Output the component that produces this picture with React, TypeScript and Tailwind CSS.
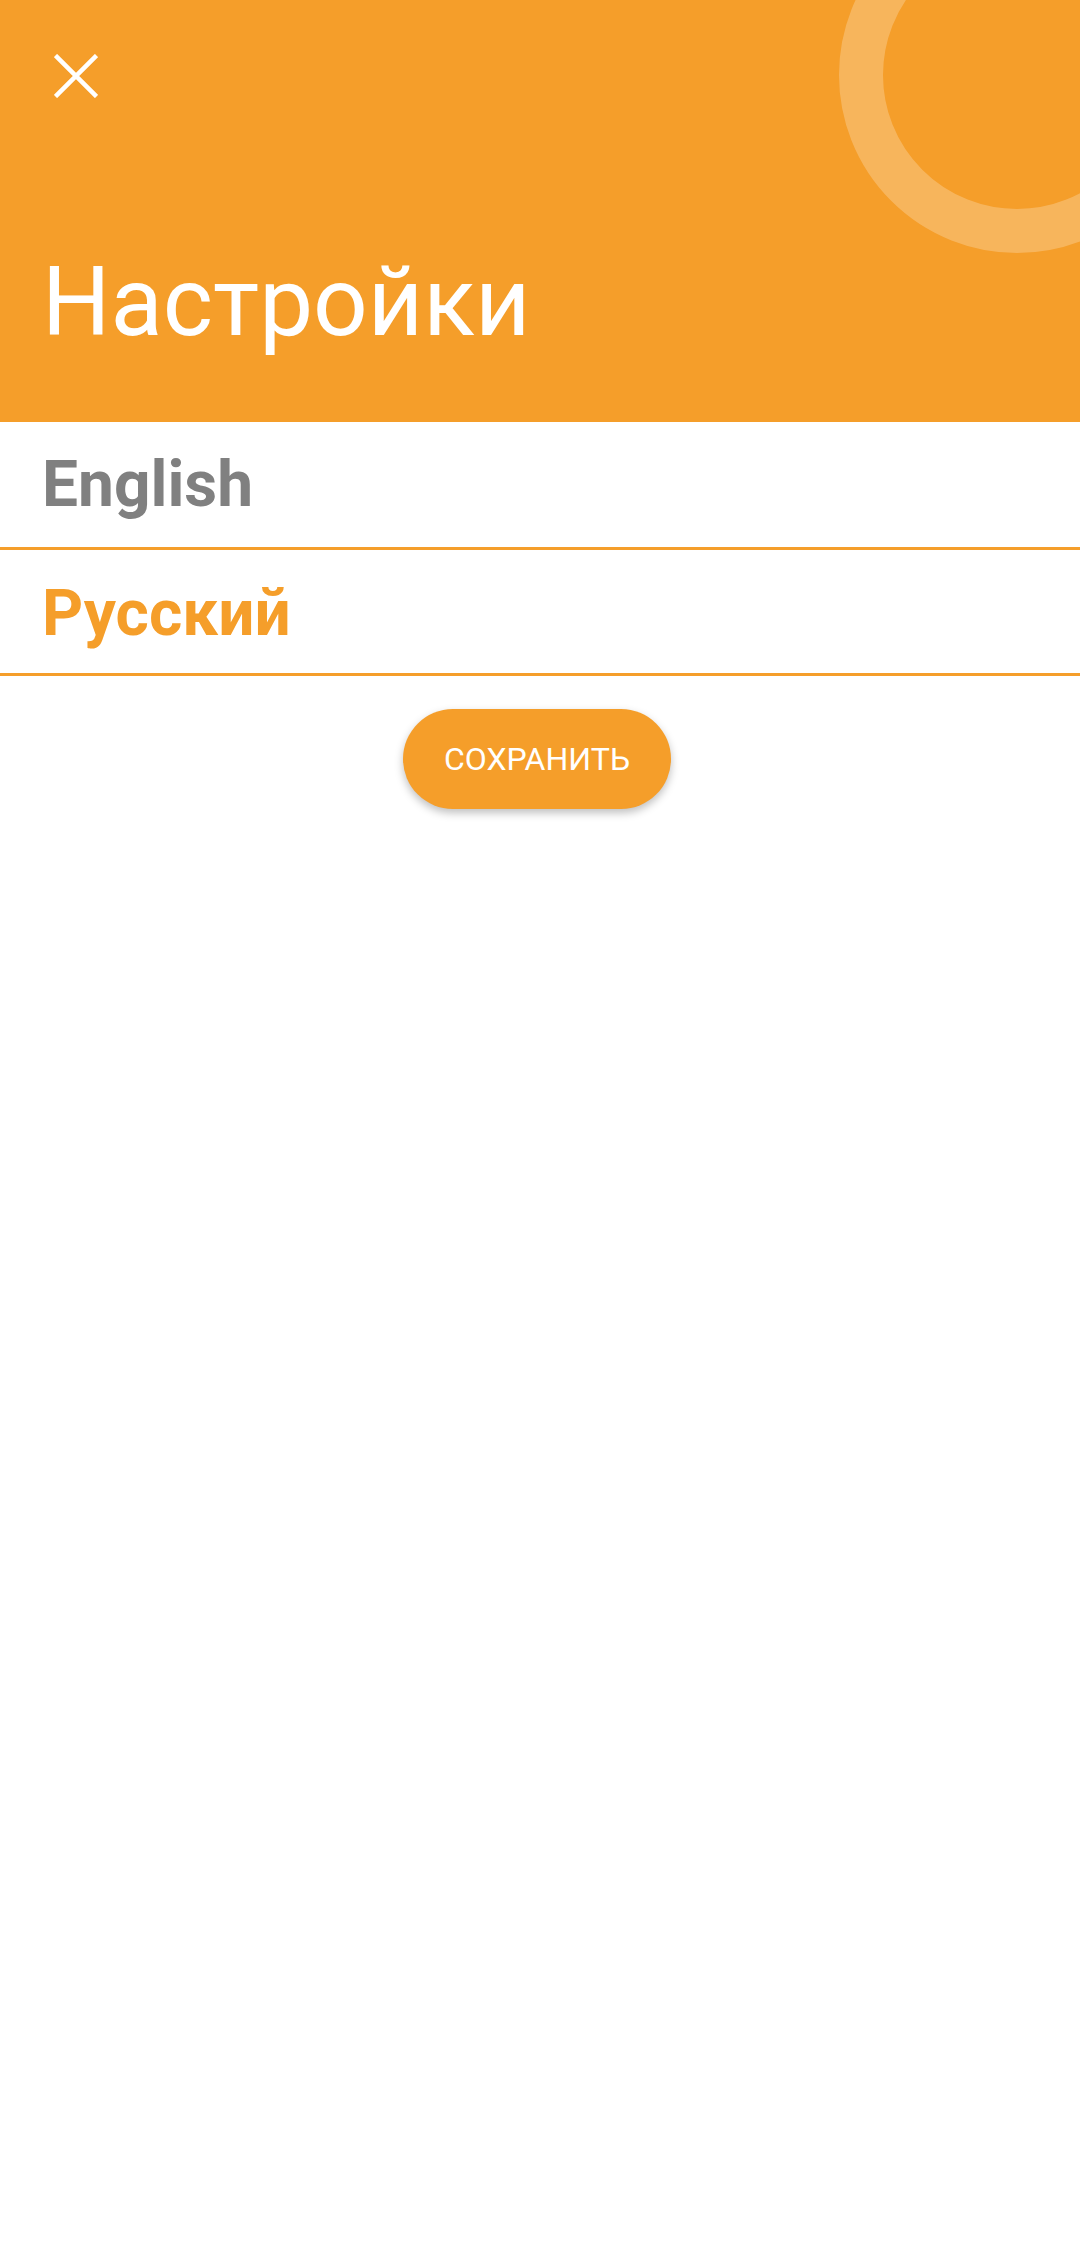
import { useState } from "react";

const langs = [
  { id: "en", label: "English" },
  { id: "ru", label: "Русский" },
];

function CloseIcon() {
  return (
    <svg width="44" height="44" viewBox="0 0 44 44" fill="none">
      <path d="M1.5 1.5L42.5 42.5M42.5 1.5L1.5 42.5" stroke="#fff" strokeWidth="4.5" />
    </svg>
  );
}

function Ring() {
  // decorative ring in the header corner
  return (
    <svg className="absolute left-0 top-0" width="1080" height="422" viewBox="0 0 1080 422" fill="none">
      <circle cx="1017" cy="75" r="156" stroke="#ffffff" strokeOpacity="0.24" strokeWidth="44" />
    </svg>
  );
}

export default function App() {
  const [lang, setLang] = useState("ru");
  return (
    <div className="min-h-[2264px] w-[1080px] bg-white font-['Roboto',sans-serif]">
      <header className="relative h-[422px] overflow-hidden bg-[#f59e2a]">
        <Ring />
        <div className="relative flex h-full flex-col">
          <button className="ml-[54px] mt-[54px] h-[44px] w-[44px]">
            <CloseIcon />
          </button>
          <h1 className="ml-[42px] mt-[156px] text-[96px] font-normal leading-none text-white">Настройки</h1>
        </div>
      </header>

      <ul>
        {langs.map((l, i) => (
          <li
            key={l.id}
            onClick={() => setLang(l.id)}
            className={
              "border-b-[3px] border-[#f59e2a] pl-[42px] leading-none " +
              (i === 0 ? "h-[128px] pt-[31px]" : "h-[126px] pt-[32px]")
            }
          >
            <span
              className={
                "text-[64px] font-bold " + (lang === l.id ? "text-[#f59e2a]" : "text-[#808080]")
              }
            >
              {l.label}
            </span>
          </li>
        ))}
      </ul>

      <div className="flex justify-center pt-[33px]">
        <button className="ml-[-6px] h-[100px] w-[268px] rounded-full bg-[#f59e2a] text-[32px] uppercase leading-none text-white shadow-[0_4px_8px_rgba(0,0,0,0.25)]">
          Сохранить
        </button>
      </div>
    </div>
  );
}
